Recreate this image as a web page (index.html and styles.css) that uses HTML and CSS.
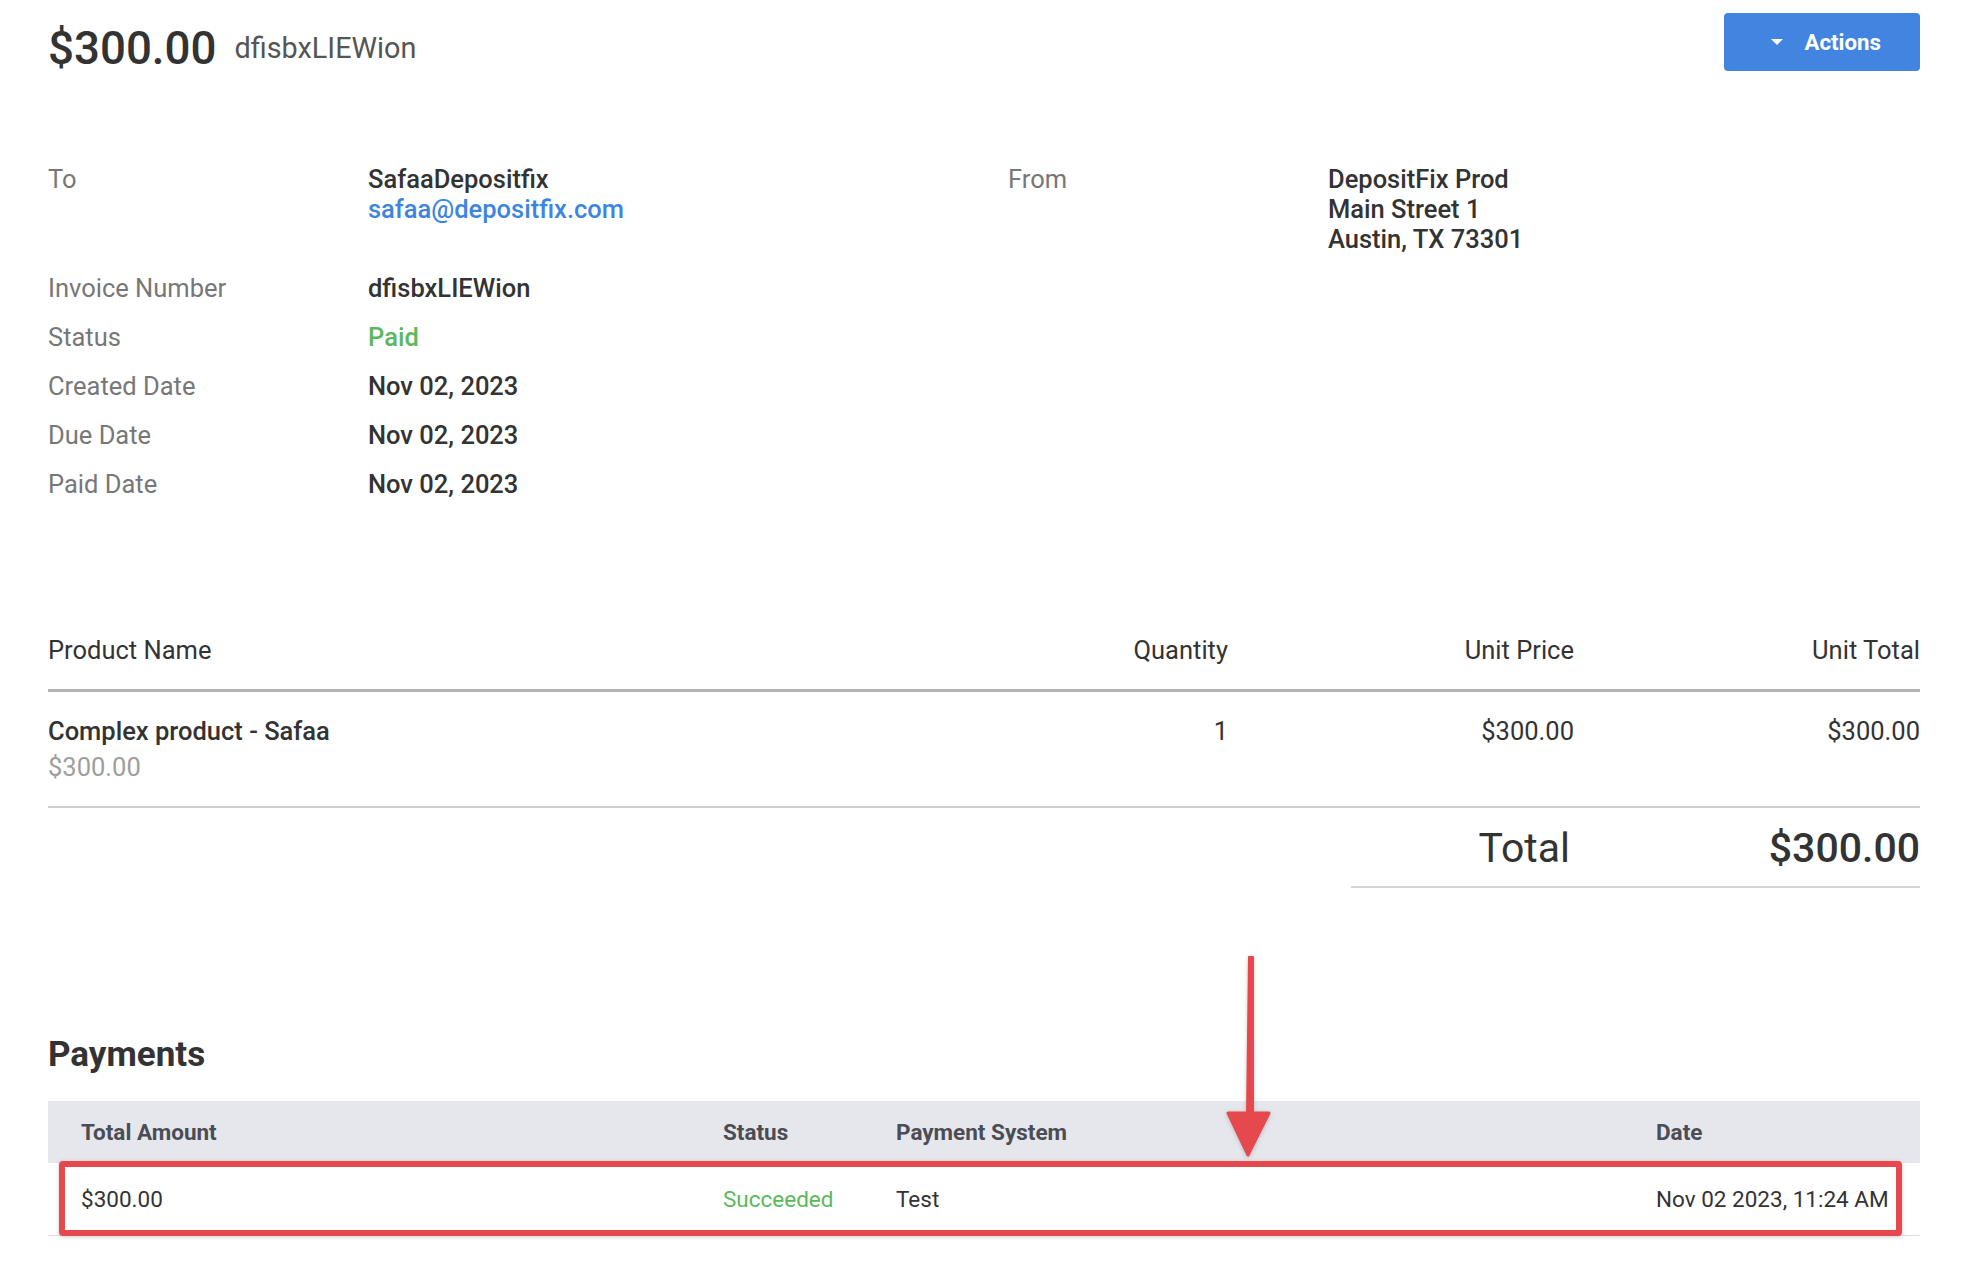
FILE: index.html
```html
<!DOCTYPE html>
<html lang="en">
<head>
  <meta charset="UTF-8" />
  <meta name="viewport" content="width=device-width, initial-scale=1.0"/>
  <title>Invoice dfisbxLIEWion</title>
  <link rel="stylesheet" href="styles.css">
</head>
<body>

  <div class="page">

    <div class="header">
      <div class="title">
        <span class="amount">$300.00</span>
        <span class="invoice-id">dfisbxLIEWion</span>
      </div>
      <button class="actions-btn">
        <span class="caret"></span>
        Actions
      </button>
    </div>

    <!-- To / From -->
    <div class="parties">
      <div class="label">To</div>
      <div class="value">
        SafaaDepositfix<br>
        <a href="#" class="email">safaa@depositfix.com</a>
      </div>
      <div class="label">From</div>
      <div class="value">
        DepositFix Prod<br>
        Main Street 1<br>
        Austin, TX 73301
      </div>
    </div>

    <div class="meta">
      <div class="label">Invoice Number</div>
      <div class="value">dfisbxLIEWion</div>
      <div class="label">Status</div>
      <div class="value paid">Paid</div>
      <div class="label">Created Date</div>
      <div class="value">Nov 02, 2023</div>
      <div class="label">Due Date</div>
      <div class="value">Nov 02, 2023</div>
      <div class="label">Paid Date</div>
      <div class="value">Nov 02, 2023</div>
    </div>

    <!-- Products -->
    <div class="products">
      <div class="products-head">
        <div>Product Name</div>
        <div class="num">Quantity</div>
        <div class="num">Unit Price</div>
        <div class="num">Unit Total</div>
      </div>
      <div class="product-row">
        <div>
          <div class="product-name">Complex product - Safaa</div>
          <div class="product-price">$300.00</div>
        </div>
        <div class="num">1</div>
        <div class="num">$300.00</div>
        <div class="num">$300.00</div>
      </div>
      <div class="total">
        <div class="total-label">Total</div>
        <div class="total-value">$300.00</div>
      </div>
    </div>

    <!-- Payments -->
    <div class="payments">
      <h2>Payments</h2>

      <div class="pay-table">
        <div class="pay-head">
          <div>Total Amount</div>
          <div>Status</div>
          <div>Payment System</div>
          <div>Date</div>
        </div>
        <div class="pay-row">
          <div>$300.00</div>
          <div class="succeeded">Succeeded</div>
          <div>Test</div>
          <div>Nov 02 2023, 11:24 AM</div>
          <div class="highlight"></div>
        </div>
      </div>

      <svg class="arrow" width="52" height="210" viewBox="0 0 52 210">
        <path d="M27 4 L31 4 L31 162 L25 162 Z" fill="#e5484d" stroke="#e5484d" stroke-width="2" stroke-linejoin="round"/>
        <path d="M6 160 L47 160 L26 202 Z" fill="#e5484d" stroke="#e5484d" stroke-width="3" stroke-linejoin="round"/>
      </svg>
    </div>

  </div>

</body>
</html>
```

FILE: styles.css
```css
body {
  margin: 0;
  font-family: Roboto, "Liberation Sans", sans-serif;
  color: #333;
  background: #fff;
}

.page {
  padding: 13px 54px 40px 48px;
}

/* header */
.header {
  display: flex;
  justify-content: space-between;
  align-items: flex-start;
}

.title {
  display: flex;
  align-items: center;
  gap: 18px;
  height: 58px;
  margin-top: 6px;
}

.amount {
  font-size: 45.7px;
  font-weight: 500;
  color: #333;
}

.invoice-id {
  font-size: 28.8px;
  color: #555;
}

.actions-btn {
  display: flex;
  align-items: center;
  gap: 21px;
  height: 58px;
  padding: 0 39px 0 47px;
  border: none;
  border-radius: 4px;
  background: #4285e0;
  color: #fff;
  font-family: inherit;
  font-size: 22.3px;
  font-weight: 700;
  cursor: pointer;
}

.caret {
  width: 0;
  height: 0;
  border-left: 6px solid transparent;
  border-right: 6px solid transparent;
  border-top: 6px solid #fff;
}

/* details */
.parties,
.meta {
  display: grid;
  font-size: 25.5px;
  line-height: 30px;
}

.parties {
  grid-template-columns: 320px 640px 320px 1fr;
  margin-top: 87px;
}

.meta {
  grid-template-columns: 320px 1fr;
  row-gap: 19px;
  margin-top: 19px;
}

.label {
  color: #777;
}

.value {
  font-weight: 500;
  color: #333;
}

.email {
  color: #3d85e0;
  text-decoration: none;
}

.paid {
  color: #5cb85c;
}

/* products */
.products {
  margin-top: 136px;
  font-size: 25.5px;
  line-height: 30px;
}

.products-head,
.product-row {
  display: grid;
  grid-template-columns: 1fr 346px 346px 346px;
}

.products-head {
  padding-bottom: 24px;
  border-bottom: 3px solid #b3b3b3;
}

.product-row {
  padding: 24px 0 24px;
  border-bottom: 2px solid #cfcfcf;
}

.num {
  text-align: right;
}

.product-name {
  font-weight: 500;
}

.product-price {
  margin-top: 6px;
  color: #9e9e9e;
}

.total {
  display: grid;
  grid-template-columns: 1fr 346px;
  width: 569px;
  margin-left: auto;
  padding: 15px 0 13px;
  border-bottom: 2px solid #d4d4d4;
  font-size: 41px;
  line-height: 50px;
}

.total-label {
  text-align: right;
  padding-right: 4px;
}

.total-value {
  text-align: right;
  font-weight: 500;
}

/* payments */
.payments {
  position: relative;
  margin-top: 147px;
}

.payments h2 {
  margin: 0 0 26px;
  font-size: 35px;
  line-height: 40px;
  font-weight: 700;
  color: #333;
}

.pay-head,
.pay-row {
  display: grid;
  grid-template-columns: 642px 173px 760px 1fr;
  align-items: center;
  padding: 0 20px 0 33px;
  font-size: 22.5px;
  white-space: nowrap;
}

.pay-head {
  height: 62px;
  background: #e6e7ec;
  color: #4a4d55;
  font-weight: 700;
}

.pay-row {
  position: relative;
  height: 72px;
  border-bottom: 1px solid #dedede;
  color: #333;
}

.succeeded {
  color: #5cb85c;
}

.highlight {
  position: absolute;
  top: -2px;
  bottom: -1px;
  left: 11px;
  right: 18px;
  border: 6px solid #e5484d;
  border-radius: 4px;
  box-shadow: 0 1px 4px rgba(0, 0, 0, 0.2);
}

.arrow {
  position: absolute;
  left: 1174px;
  top: -82px;
  filter: drop-shadow(0 1px 2px rgba(0, 0, 0, 0.2));
}
```
